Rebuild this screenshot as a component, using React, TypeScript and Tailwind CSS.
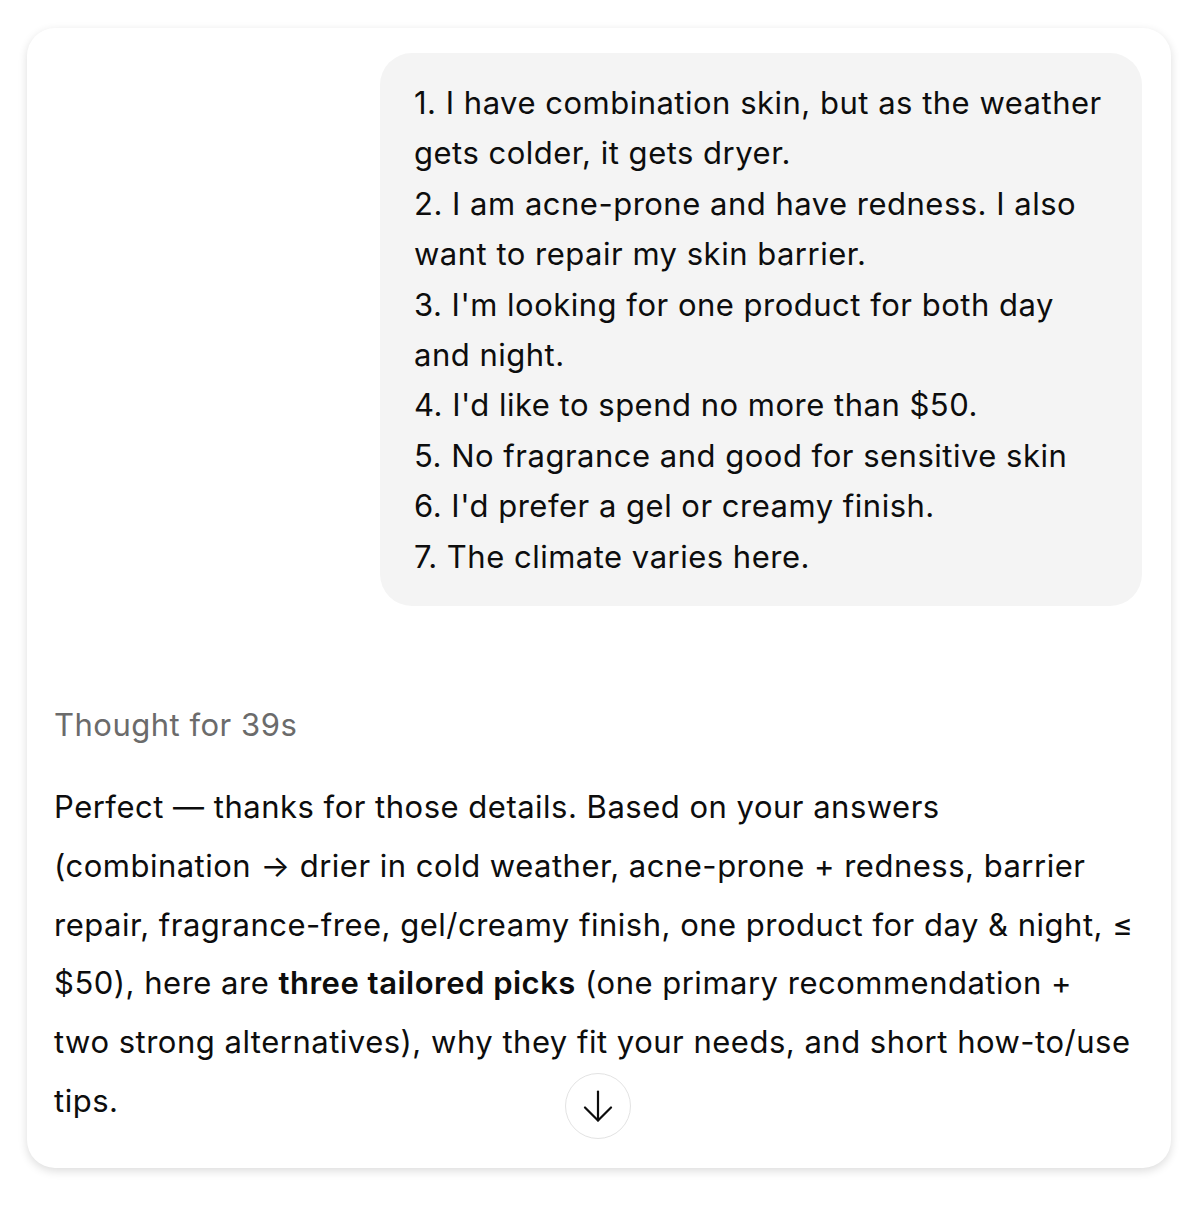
const userLines = [
  "1. I have combination skin, but as the weather",
  "gets colder, it gets dryer.",
  "2. I am acne-prone and have redness. I also",
  "want to repair my skin barrier.",
  "3. I'm looking for one product for both day",
  "and night.",
  "4. I'd like to spend no more than $50.",
  "5. No fragrance and good for sensitive skin",
  "6. I'd prefer a gel or creamy finish.",
  "7. The climate varies here.",
];

export default function App() {
  return (
    <div className="min-h-[1210px] w-[1195px] bg-white pt-[28px] pl-[27px] font-['Inter',sans-serif]">
      <div className="relative h-[1140px] w-[1144px] rounded-[28px] bg-white pt-[25px] pr-[29px] pl-[27px] shadow-[0_3px_10px_rgba(0,0,0,0.14)]">
        <div className="flex justify-end">
          <div className="w-[762px] rounded-[32px] bg-[#f4f4f4] px-[34px] pt-[25px] pb-[24px] text-[31px] leading-[50.4px] tracking-[0.5px] text-[#0d0d0d]">
            {userLines.map((line) => (
              <div key={line}>{line}</div>
            ))}
          </div>
        </div>

        <div className="mt-[99px] text-[31px] leading-[40px] tracking-[0.5px] text-[#6b6b6b]">
          Thought for 39s
        </div>

        <p className="mt-[33px] text-[31px] leading-[58.8px] tracking-[0.5px] text-[#0d0d0d]">
          Perfect — thanks for those details. Based on your answers
          <br />
          (combination → drier in cold weather, acne-prone + redness, barrier
          <br />
          repair, fragrance-free, gel/creamy finish, one product for day &amp; night, ≤
          <br />
          $50), here are <strong className="font-semibold">three tailored picks</strong> (one primary recommendation +
          <br />
          two strong alternatives), why they fit your needs, and short how-to/use
          <br />
          tips.
        </p>

        <button className="absolute top-[1045px] left-[538px] flex h-[66px] w-[66px] items-center justify-center rounded-full border border-[#e3e3e3] bg-white">
          <svg width="30" height="32" viewBox="0 0 30 32" fill="none" stroke="#0d0d0d" strokeWidth="2.2" strokeLinecap="round" strokeLinejoin="round">
            <path d="M15 1.5V30.5" />
            <path d="M2 17.5L15 30.5L28 17.5" />
          </svg>
        </button>
      </div>
    </div>
  );
}
